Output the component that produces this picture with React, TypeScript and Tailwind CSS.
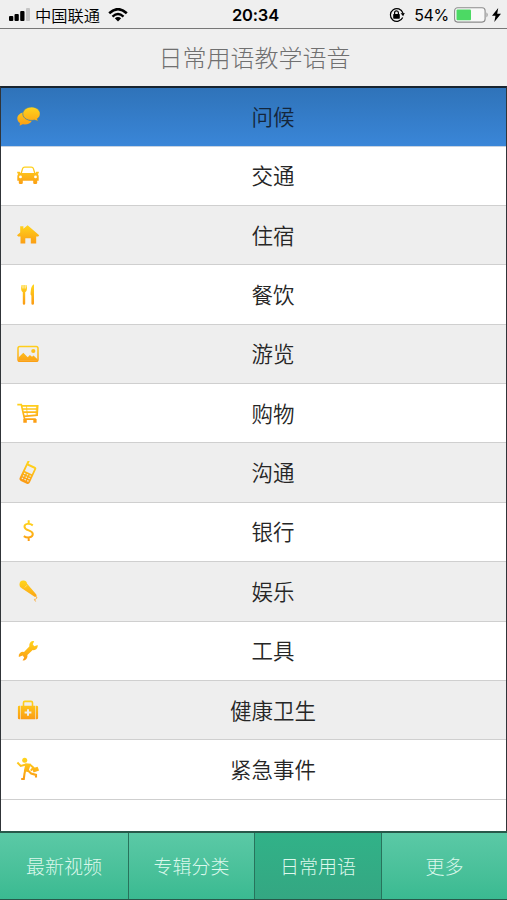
import React from 'react';

const FILL = 'url(#gold)';

const icons: Record<string, React.ReactNode> = {
    chat: (
        <>
            <path d="M8.300 7.200C4.200 7.600 1.300 10.400 1.300 13.500c0 1.900 1 3.500 2.700 4.600l-.4 2.600 3-1.400c4.200.7 8.300-.9 9.300-3.800-4.600.3-8.700-3.300-7.600-8.300z" fill={FILL} />
            <path d="M15.500 2c4.800 0 8.700 3 8.700 6.800 0 2-1 3.700-2.800 4.900l.8 2.600-3.700-1.200c-5.800 1.300-11.700-1.500-11.700-6.300C6.800 5 10.700 2 15.500 2z" fill={FILL} stroke="#3c7fae" strokeWidth=".7" />
        </>
    ),
    car: (
        <>
            <path d="M5.200 9.200 6.600 4.600Q7 3.100 8.700 3.100h6.600q1.700 0 2.100 1.500l1.400 4.600" fill="none" stroke={FILL} strokeWidth="1.300" />
            <path
                fillRule="evenodd"
                d="M1.200 7.800h2.600l.6 1.100h15.200l.6-1.100h2.600v1.400l-1.100.6q1 1.100 1 2.700v4.300h-1.500v2.200q0 1-1.400 1h-1.200q-1.400 0-1.400-1v-2.200H6.800V19q0 1-1.400 1H4.200q-1.400 0-1.400-1v-2.200H1.300v-4.300q0-1.600 1-2.700l-1.100-.6zM4.500 11.500a1.400 1.400 0 1 0 0 2.800 1.400 1.400 0 0 0 0-2.800zm15 0a1.400 1.400 0 1 0 0 2.800 1.400 1.400 0 0 0 0-2.800z"
                fill={FILL}
            />
        </>
    ),
    home: (
        <path d="M4.200 3.200h3.200v2.600l4.200-3.500L23.200 12.200l-1 1.200h-2v7h-5.400v-5.200H9.300v5.200H4.500v-7H2.200l-1.200-1.200 3.200-2.800z" fill={FILL} />
    ),
    food: (
        <>
            <path d="M5.600 2h1v3.500h.8V2h1.300v3.500h.8V2h1q1.300 5.600-1.300 7.300v11.200q0 1.300-1.200 1.300t-1.200-1.300V9.300Q4.300 7.600 5.600 2z" fill={FILL} />
            <path d="M18 1.300v19.200q0 1.300-1.300 1.300t-1.300-1.300v-7.800q-1.300-1-.8-3.200.2-6.600 3.400-8.200z" fill={FILL} />
        </>
    ),
    photo: (
        <>
            <rect x="2" y="4.400" width="20" height="14.800" rx="1.800" fill="none" stroke={FILL} strokeWidth="1.500" />
            <circle cx="17.300" cy="9" r="2.100" fill={FILL} />
            <path d="M2.500 18.700v-3.200l4.800-4.800 4.400 4.500 2.200-2.200 2.100 1.800 1.500-1.300 4 3.700v1.500z" fill={FILL} />
        </>
    ),
    cart: (
        <>
            <path
                d="M1.300 3.600h4l3.300 14.600h11.200M5.800 4.900h15.900l-.6 9.300-13.300 1.100M6.400 8h15M7 11.200h14.200"
                fill="none"
                stroke={FILL}
                strokeWidth="1.700"
            />
            <path d="M10.500 5l.8 9.500M20.500 5l-.5 9" fill="none" stroke={FILL} strokeWidth=".8" />
            <path d="M7.300 18h3.500v3.700H7.300zM17.300 18h3.300v3.700h-3.300z" fill={FILL} />
        </>
    ),
    phone: (
        <g transform="rotate(25 12 12)">
            <path
                fillRule="evenodd"
                d="M6.500.3h2v3h7.200q2 0 2 1.800v14.500q0 2.600-2.400 2.600H8.900q-2.400 0-2.400-2.600zM8.300 5.500v6h7.700v-6zM8.500 13.200h1.500v1.200H8.500zm3 0H13v1.200h-1.500zm3 0H16v1.200h-1.500zm-6 2.700h1.500v1.200H8.500zm3 0H13v1.200h-1.500zm3 0H16v1.200h-1.500zm-6 2.700h1.500v1.200H8.500zm3 0H13v1.200h-1.500zm3 0H16v1.200h-1.500z"
                fill={FILL}
            />
        </g>
    ),
    dollar: (
        <path
            d="M12.700.3v3.500M12.700 17.500V21M16.800 5.400C13.300 2.800 8.500 3.500 8.500 6.700c0 4.200 8.300 3.200 8.300 7.300 0 3.700-5.500 4.400-9 2.100"
            fill="none"
            stroke={FILL}
            strokeWidth="2"
        />
    ),
    mic: (
        <>
            <circle cx="7.300" cy="5.400" r="3.800" fill={FILL} />
            <path d="M10.700 4.300 20.300 15.500q.8 1.300-.3 2t-2.200-.2L5.400 9z" fill={FILL} />
            <path d="M19.300 17q2.500 1 1.300 2.300t-2 .9 1 2.300" fill="none" stroke={FILL} strokeWidth=".8" />
            <path d="M8.800 8.500 11 6.200" stroke="#fff1b8" strokeWidth=".5" />
        </>
    ),
    wrench: (
        <path
            d="M14.600 2.900q1.500-1.200 3.600-.7l-1.500 3 1.500 2 3.500-1.100q.4 2.500-1.200 4t-3.800 1l-5.300 5q.5 2.300-1 4t-3.800 1.500l1.600-3-1.600-2-3.800 1.300q-.5-2.500 1.200-4t4-1l5.300-5.300q-.5-2.900 1.300-4.700z"
            fill={FILL}
        />
    ),
    medical: (
        <>
            <path d="M7.500 8V4.800q0-1.400 1.400-1.400h6.200q1.400 0 1.400 1.400V8" fill="none" stroke={FILL} strokeWidth="1.600" />
            <path
                fillRule="evenodd"
                d="M4.200 7.700v13.600h-.9q-1.400 0-1.400-1.400V9.100q0-1.400 1.400-1.400zM4.800 7.700h14.400v13.600H4.800zM19.800 7.700h.9q1.400 0 1.400 1.400v10.800q0 1.400-1.400 1.400h-.9zM11 11.200v2.300H8.600v2H11v2.300h2v-2.300h2.400v-2H13v-2.300z"
                fill={FILL}
            />
        </>
    ),
    run: (
        <>
            <circle cx="8.700" cy="3.300" r="2.500" fill={FILL} />
            <path d="M1.400 5.500 4.700 8.900 10 7.500M13.800 7.500l3.600 3.200-2.600 3" fill="none" stroke={FILL} strokeWidth="1.900" />
            <path d="m9.500 6.300 5.500.4-2.800 8.300-4.400-.8z" fill={FILL} />
            <path d="m9.300 13-.8 3.700-.7 5.300H5.200M11.200 12.800l4 3.800 4.800 1.300v2.600" fill="none" stroke={FILL} strokeWidth="2.100" />
            <path d="m15.800 11.500 5.800-1.800 1.500 3.800-5.500 2.100z" fill={FILL} />
        </>
    ),
};

const rows = [
    { icon: 'chat', label: '问候' },
    { icon: 'car', label: '交通' },
    { icon: 'home', label: '住宿' },
    { icon: 'food', label: '餐饮' },
    { icon: 'photo', label: '游览' },
    { icon: 'cart', label: '购物' },
    { icon: 'phone', label: '沟通' },
    { icon: 'dollar', label: '银行' },
    { icon: 'mic', label: '娱乐' },
    { icon: 'wrench', label: '工具' },
    { icon: 'medical', label: '健康卫生' },
    { icon: 'run', label: '紧急事件' },
];

const tabs = ['最新视频', '专辑分类', '日常用语', '更多'];

export default function App() {
    return (
        <div className="w-[507px] h-[900px] flex flex-col overflow-hidden bg-[#efefef] font-['Noto_Sans_CJK_SC',sans-serif]">
            <svg className="absolute w-0 h-0" aria-hidden="true">
                <defs>
                    <linearGradient id="gold" gradientUnits="userSpaceOnUse" x1="0" y1="3" x2="0" y2="21">
                        <stop offset="0" stopColor="#ffd21c" />
                        <stop offset="1" stopColor="#fb9c14" />
                    </linearGradient>
                </defs>
            </svg>
            <StatusBar />
            <header className="h-[57px] shrink-0 flex items-center justify-center pl-[2px] pb-[2px] text-2xl font-light text-[#707070]">
                日常用语教学语音
            </header>

            {/* Category list */}
            <main className="flex-1 min-h-0 bg-white border-t-2 border-x border-[#303438] border-t-[#18242f] flex flex-col">
                {rows.map((row, i) => (
                    <Row key={row.label} icon={row.icon} label={row.label} active={i === 0} shaded={i % 2 === 0} />
                ))}
            </main>

            <nav className="h-[69px] shrink-0 grid grid-cols-[129px_126px_127px_125px] border-t-2 border-b border-[#28584a]">
                {tabs.map((tab, i) => (
                    <TabItem key={tab} label={tab} active={i === 2} last={i === tabs.length - 1} />
                ))}
            </nav>
        </div>
    );
}

function Row({ icon, label, active, shaded }: { icon: string; label: string; active: boolean; shaded: boolean }) {
    return (
        <div
            className={`shrink-0 flex items-center pl-[15px] border-b ${active
                    ? 'h-[58.75px] bg-linear-to-b from-[#2f73b9] to-[#3a86d8] border-[#c6d3e2]'
                    : shaded ? 'h-[59.35px] bg-[#eee] border-[#cfcfcf]' : 'h-[59.35px] bg-white border-[#cfcfcf]'
                }`}
        >
            <svg width="24" height="24" viewBox="0 0 24 24">{icons[icon]}</svg>
            <span className={`flex-1 pb-px text-center text-[21.5px] leading-8 font-[350] ${active ? 'text-[#14263b]' : 'text-[#262626]'}`}>
                {label}
            </span>
        </div>
    );
}

function TabItem({ label, active, last }: { label: string; active: boolean; last: boolean }) {
    return (
        <button
            className={`flex items-center justify-center text-[19px] font-light text-[#dcf8ec] ${last ? '' : 'border-r border-[#28735c]'} ${active
                    ? 'bg-linear-to-b from-[#31b288] to-[#34a782]'
                    : 'bg-linear-to-b from-[#5bc9a6] to-[#3aba91]'
                }`}
        >
            {label}
        </button>
    );
}

function StatusBar() {
    return (
        <div className="h-[29px] shrink-0 grid grid-cols-[1fr_auto_1fr] items-center border-b border-[#777] text-black">
            <div className="flex items-center pl-[9px] pt-px">
                <svg width="22" height="13" viewBox="0 0 22 13">
                    <rect x="0" y="8" width="4.300" height="5" rx="1" />
                    <rect x="5.500" y="6" width="4.300" height="7" rx="1" />
                    <rect x="11.200" y="3" width="4.300" height="10" rx="1" />
                    <rect x="17" y="0" width="4" height="13" rx="1" fill="#c5c5c5" />
                </svg>
                <span className="ml-[4px] text-[16.300px] leading-6 font-[350]">中国联通</span>
                <svg className="ml-[8px]" width="20" height="14" viewBox="0 0 20 14">
                    <path d="M1.200 5.200Q10-2.800 18.800 5.200" fill="none" stroke="#000" strokeWidth="2.600" />
                    <path d="M4.500 8.600Q10 3.600 15.500 8.600" fill="none" stroke="#000" strokeWidth="2.400" />
                    <path d="M6.800 10.300Q10 7.800 13.200 10.300L10 13.500z" />
                </svg>
            </div>
            <span className="pl-[4px] pt-[3px] font-['Inter',sans-serif] text-[16.500px] font-semibold tracking-[-0.2px]">20:34</span>
            <div className="flex items-center justify-end pr-[6px] pt-px">
                <svg width="16" height="16" viewBox="0 0 16 16">
                    <path d="M13.700 10.500A6.400 6.400 0 1 1 13.900 6" fill="none" stroke="#000" strokeWidth="1.200" />
                    <path d="m11.600 6.200 4.200-.2-1.700 3.200z" />
                    <rect x="4.200" y="7" width="6.600" height="4.700" rx=".7" />
                    <path d="M5.600 7.500V5.700a1.900 1.900 0 0 1 3.800 0v1.800" fill="none" stroke="#000" strokeWidth="1.200" />
                </svg>
                <span className="ml-[9px] font-['Inter',sans-serif] text-base tracking-[-0.3px]">54%</span>
                <svg className="ml-[5px]" width="35" height="16" viewBox="0 0 35 16">
                    <rect x=".6" y=".7" width="30.500" height="14.400" rx="3" fill="#f8f8f8" stroke="#8c8c8c" strokeWidth="1.100" />
                    <rect x="2.500" y="2.600" width="14.500" height="10.600" rx="1" fill="#4cd964" />
                    <path d="M32.500 5.300q2.300 2.600 0 5.200z" fill="#8c8c8c" />
                </svg>
                <svg className="ml-[3px]" width="9" height="14" viewBox="0 0 9 14">
                    <path d="M6.200 0 0 7.800h3.500L2.300 14 9 5.800H5.200z" />
                </svg>
            </div>
        </div>
    );
}
